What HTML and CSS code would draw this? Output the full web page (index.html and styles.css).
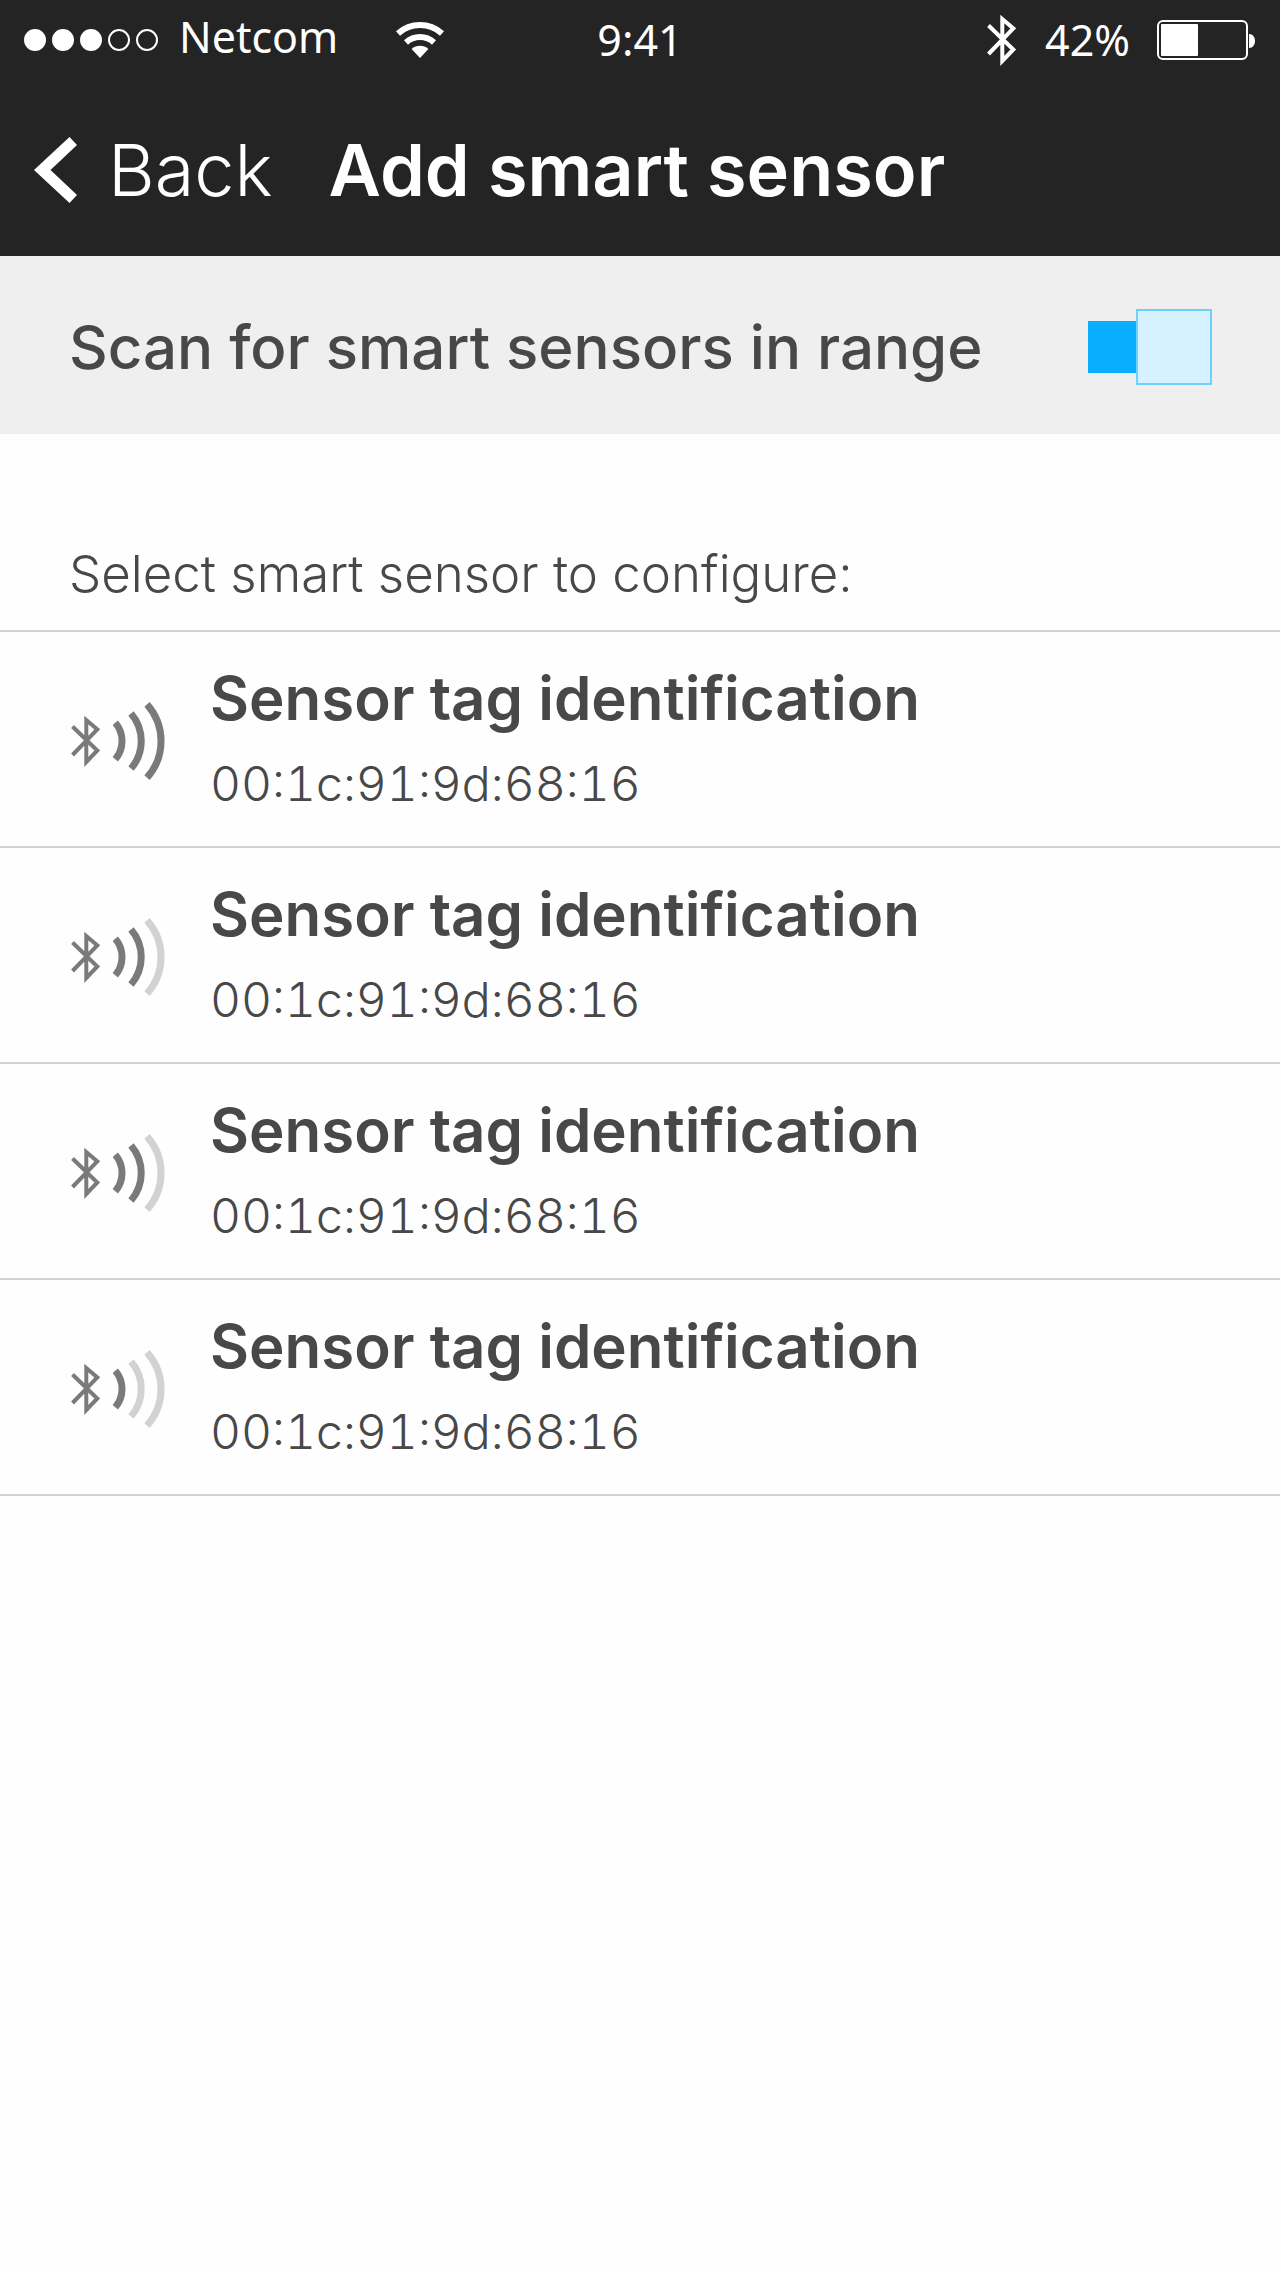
FILE: index.html
```html
<!DOCTYPE html>
<html lang="en">
<head>
<meta charset="utf-8">
<meta name="viewport" content="width=device-width, initial-scale=1">
<title>Add smart sensor</title>
<link rel="stylesheet" href="styles.css">
</head>
<body>
<svg class="defs" aria-hidden="true">
  <symbol id="bt" viewBox="0 0 32 54">
    <path d="M2.5 12.5 27.3 36.5 16.3 48V6L27.3 15.5 2.5 41" fill="none" stroke="currentColor" stroke-miterlimit="6"/>
  </symbol>
</svg>
<header class="header">
  <div class="status">
    <div class="status-left">
      <div class="dots"><i class="dot on"></i><i class="dot on"></i><i class="dot on"></i><i class="dot"></i><i class="dot"></i></div>
      <span class="carrier">Netcom</span>
      <svg class="wifi" width="48" height="36" viewBox="0 0 48 36" aria-hidden="true">
        <g fill="none" stroke="#fff" stroke-width="6"><path d="M2 11.5A33 33 0 0 1 46 11.5"/><path d="M10 20.4A21 21 0 0 1 38 20.4"/></g>
        <path d="M24 36 15.6 26.9A12.5 12.5 0 0 1 32.4 26.9Z" fill="#fff"/>
      </svg>
    </div>
    <time class="time">9:41</time>
    <div class="status-right">
      <svg class="bt-status" width="32" height="54" aria-hidden="true"><use href="#bt"/></svg>
      <span>42%</span>
      <svg width="99" height="40" viewBox="0 0 99 40" aria-hidden="true">
        <rect x="1" y="1" width="89" height="38" rx="5" fill="none" stroke="#fff" stroke-width="2"/>
        <rect x="4" y="4" width="37" height="32" rx="1" fill="#fff"/>
        <path d="M92 14C100 14 100 28 92 28Z" fill="#fff"/>
      </svg>
    </div>
  </div>
  <nav class="nav">
    <button class="back" type="button">
      <svg width="44" height="66" viewBox="0 0 44 66" aria-hidden="true"><path d="M0 33 35.5 0 43 8 16.5 33 43 58 35.5 66Z" fill="#fff"/></svg>
      Back
    </button>
    <h1 class="title">Add smart sensor</h1>
  </nav>
</header>
<main>
  <label class="scan" for="scan">
    <span>Scan for smart sensors in range</span>
    <input class="toggle" id="scan" type="checkbox" role="switch" checked>
  </label>
  <p class="hint">Select smart sensor to configure:</p>
  <ul class="sensors">
    <li><a class="sensor" href="#sensor-1">
      <svg class="signal s3" width="96" height="84" viewBox="0 0 96 84" aria-hidden="true"><use href="#bt" y="15" width="32" height="54"/><path d="M45.3 23.8A28 28 0 0 1 45.3 60.2"/><path d="M61 14.5A42 42 0 0 1 61 69.5"/><path d="M77 5.3A55 55 0 0 1 77 78.7"/></svg>
      <span class="info"><strong class="name">Sensor tag identification</strong><span class="mac">00:1c:91:9d:68:16</span></span>
    </a></li>
    <li><a class="sensor" href="#sensor-2">
      <svg class="signal s2" width="96" height="84" viewBox="0 0 96 84" aria-hidden="true"><use href="#bt" y="15" width="32" height="54"/><path d="M45.3 23.8A28 28 0 0 1 45.3 60.2"/><path d="M61 14.5A42 42 0 0 1 61 69.5"/><path d="M77 5.3A55 55 0 0 1 77 78.7"/></svg>
      <span class="info"><strong class="name">Sensor tag identification</strong><span class="mac">00:1c:91:9d:68:16</span></span>
    </a></li>
    <li><a class="sensor" href="#sensor-3">
      <svg class="signal s2" width="96" height="84" viewBox="0 0 96 84" aria-hidden="true"><use href="#bt" y="15" width="32" height="54"/><path d="M45.3 23.8A28 28 0 0 1 45.3 60.2"/><path d="M61 14.5A42 42 0 0 1 61 69.5"/><path d="M77 5.3A55 55 0 0 1 77 78.7"/></svg>
      <span class="info"><strong class="name">Sensor tag identification</strong><span class="mac">00:1c:91:9d:68:16</span></span>
    </a></li>
    <li><a class="sensor" href="#sensor-4">
      <svg class="signal s1" width="96" height="84" viewBox="0 0 96 84" aria-hidden="true"><use href="#bt" y="15" width="32" height="54"/><path d="M45.3 23.8A28 28 0 0 1 45.3 60.2"/><path d="M61 14.5A42 42 0 0 1 61 69.5"/><path d="M77 5.3A55 55 0 0 1 77 78.7"/></svg>
      <span class="info"><strong class="name">Sensor tag identification</strong><span class="mac">00:1c:91:9d:68:16</span></span>
    </a></li>
  </ul>
</main>
</body>
</html>
```
FILE: styles.css
```css
*, *::before, *::after { box-sizing: border-box; }
body {
  margin: 0;
  padding-right: 1px;
  background: #fefefe;
  color: #484848;
  font-family: Inter, "Liberation Sans", sans-serif;
}
svg { display: block; flex: none; }
.defs { width: 0; height: 0; position: absolute; }

.header { background: #242424; color: #fff; }
.status {
  display: grid;
  grid-template-columns: 1fr auto 1fr;
  align-items: center;
  height: 80px;
  padding: 0 24px;
  font: 400 43px/80px "Noto Sans", "Open Sans", sans-serif;
}
.status-left, .status-right { display: flex; align-items: center; }
.status-right { justify-content: flex-end; gap: 27px; }
.dots { display: flex; gap: 6px; margin-right: 21px; }
.dot { width: 22px; height: 22px; border: 2px solid #fff; border-radius: 50%; }
.dot.on { background: #fff; }
.carrier { padding-bottom: 6px; line-height: 72px; }
.wifi { margin-left: 58px; }
.bt-status { stroke-width: 4px; }

.nav {
  display: flex;
  align-items: center;
  gap: 56px;
  height: 176px;
  padding: 4px 34px 0;
}
.back {
  display: flex;
  align-items: center;
  gap: 30px;
  padding: 0;
  border: 0;
  background: none;
  color: inherit;
  font: 300 72px/80px Inter, "Liberation Sans", sans-serif;
}
.title { margin: 0; font-size: 72px; font-weight: 600; line-height: 80px; }

.scan {
  display: flex;
  align-items: center;
  justify-content: space-between;
  padding: 53px 68px 49px 69px;
  background: #efefef;
  font-size: 60px;
  font-weight: 500;
  line-height: 76px;
}
.toggle {
  appearance: none;
  flex: none;
  display: flex;
  align-items: center;
  width: 124px;
  height: 76px;
  margin: 0;
}
.toggle::before { content: ""; width: 48px; height: 52px; background: #0aaeff; }
.toggle::after {
  content: "";
  width: 76px;
  height: 76px;
  border: 2px solid #6fcfff;
  background: #d6f1ff;
}
.toggle:not(:checked) { flex-direction: row-reverse; }
.toggle:not(:checked)::before { background: #b5b5b5; }

.hint {
  margin: 0;
  padding: 108px 69px 24px;
  font-size: 51px;
  font-weight: 300;
  line-height: 64px;
}
.sensors { margin: 0; padding: 0; list-style: none; border-top: 2px solid #d2d2d2; }
.sensor {
  display: flex;
  align-items: center;
  gap: 44px;
  padding: 34px 70px 30px;
  border-bottom: 2px solid #d2d2d2;
  color: inherit;
  text-decoration: none;
}
.info { display: flex; flex-direction: column; gap: 22px; line-height: 64px; }
.name { font-size: 60px; font-weight: 600; }
.mac { font-size: 48px; font-weight: 300; font-variant-numeric: tabular-nums; }
.signal { color: #7a7a7a; fill: none; stroke: #7a7a7a; }
.signal use { stroke-width: 4px; }
.signal > path { stroke-width: 7px; }
.s2 > path:nth-of-type(3), .s1 > path:nth-of-type(n+2) { stroke: #d2d2d2; }
```
